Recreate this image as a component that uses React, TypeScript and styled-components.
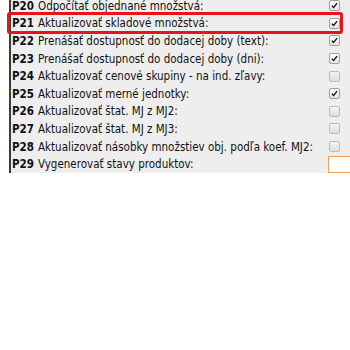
import React from 'react';
import styled, { createGlobalStyle } from 'styled-components';

const GlobalStyle = createGlobalStyle`
  html, body {
    margin: 0;
    padding: 0;
    background: #ffffff;
    overflow: hidden;
  }
`;

const Page = styled.div`
  width: 350px;
  height: 350px;
  overflow: hidden;
  font-family: "DejaVu Sans Condensed", "DejaVu Sans", Verdana, sans-serif;
  color: #111;
`;

const Panel = styled.div`
  margin-top: -3px;
  margin-left: 9px;
  border-left: 2px solid #3c3c3c;
  background: #eeeeee;
  width: 360px;
`;

const Row = styled.div`
  position: relative;
  display: grid;
  grid-template-columns: 312px 1fr;
  align-items: center;
  height: 17.6px;
`;

const Label = styled.div`
  padding-left: 1px;
  font-size: 11.5px;
  white-space: nowrap;
`;

const Code = styled.b`
  font-weight: 700;
  margin-right: 4px;
`;

const Cell = styled.div`
  display: flex;
  align-items: center;
  padding-left: 6px;
`;

const Box = styled.span<{ $checked: boolean }>`
  display: inline-flex;
  align-items: center;
  justify-content: center;
  width: 9px;
  height: 9px;
  border: 1px solid ${p => (p.$checked ? '#a0a0a0' : '#bcbcbc')};
  border-radius: 2px;
  background: ${p => (p.$checked ? 'linear-gradient(#ffffff, #e4e4e4)' : 'linear-gradient(#f4f4f4, #dedede)')};
`;

const TextField = styled.div`
  margin-left: -1px;
  width: 40px;
  height: 15px;
  border: 1px solid #f0a05a;
  background: #ffffff;
`;

const Highlight = styled.div`
  position: absolute;
  top: -3px;
  bottom: -2px;
  left: -4px;
  width: 330px;
  border: 3.5px solid #e8141c;
  border-radius: 3px;
  pointer-events: none;
`;

type Param = {
  code: string;
  label: string;
  kind: 'check' | 'text';
  checked?: boolean;
  highlight?: boolean;
};

const params: Param[] = [
  { code: 'P20', label: 'Odpočítať objednané množstvá:', kind: 'check', checked: true },
  { code: 'P21', label: 'Aktualizovať skladové množstvá:', kind: 'check', checked: true, highlight: true },
  { code: 'P22', label: 'Prenášať dostupnosť do dodacej doby (text):', kind: 'check', checked: true },
  { code: 'P23', label: 'Prenášať dostupnosť do dodacej doby (dni):', kind: 'check', checked: true },
  { code: 'P24', label: 'Aktualizovať cenové skupiny - na ind. zľavy:', kind: 'check', checked: false },
  { code: 'P25', label: 'Aktualizovať merné jednotky:', kind: 'check', checked: true },
  { code: 'P26', label: 'Aktualizovať štat. MJ z MJ2:', kind: 'check', checked: false },
  { code: 'P27', label: 'Aktualizovať štat. MJ z MJ3:', kind: 'check', checked: false },
  { code: 'P28', label: 'Aktualizovať násobky množstiev obj. podľa koef. MJ2:', kind: 'check', checked: false },
  { code: 'P29', label: 'Vygenerovať stavy produktov:', kind: 'text' },
];

const CheckBox = ({ checked }: { checked: boolean }) => (
  <Box $checked={checked}>
    {checked && (
      <svg width="7" height="7" viewBox="0 0 7 7">
        <path d="M0.9 3.7 L2.6 5.5 L6.1 1.1" fill="none" stroke="#1a1a1a" strokeWidth="1.4" />
      </svg>
    )}
  </Box>
);

export default function App() {
  return (
    <Page>
      <GlobalStyle />
      <Panel>
        {params.map(p => (
          <Row key={p.code}>
            <Label>
              <Code>{p.code}</Code>
              {p.label}
            </Label>
            <Cell>
              {p.kind === 'check' ? <CheckBox checked={!!p.checked} /> : <TextField />}
            </Cell>
            {p.highlight && <Highlight />}
          </Row>
        ))}
      </Panel>
    </Page>
  );
}
